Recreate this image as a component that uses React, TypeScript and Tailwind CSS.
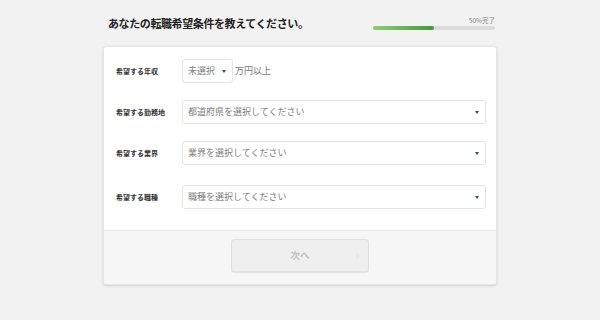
import { ChevronRight } from "lucide-react";

const font = { fontFamily: '"Noto Sans CJK JP", "Noto Sans", sans-serif' };

function Caret() {
  return (
    <svg width="4" height="3" viewBox="0 0 4 3" className="shrink-0">
      <path d="M0 0 L4 0 L2 3 Z" fill="#2f4f6f" />
    </svg>
  );
}

function Select({ text, wide = true }: { text: string; wide?: boolean }) {
  return (
    <div
      className={`flex h-[24px] items-center justify-between rounded-[3px] border border-[#e3e3e3] bg-white pl-[5px] pr-[6px] ${
        wide ? "flex-1" : "w-[51px]"
      }`}
    >
      <span className="text-[9px] text-[#808080]">{text}</span>
      <Caret />
    </div>
  );
}

function Row({ label, className, children }: { label: string; className?: string; children: React.ReactNode }) {
  return (
    <div className={`flex items-center ${className ?? ""}`}>
      <div className="w-[66px] text-[7px] font-bold text-[#333]">{label}</div>
      {children}
    </div>
  );
}

export default function App() {
  return (
    <div className="h-[320px] w-[600px] bg-[#f2f2f2]" style={font}>
      <div className="mx-auto w-[394px]">
        <div className="flex h-[46px] items-center justify-between pl-[5px] pr-[2px]">
          <h1 className="text-[11px] font-bold tracking-[-0.4px] text-[#222]">あなたの転職希望条件を教えてください。</h1>
          <div className="flex w-[122px] flex-col items-end pt-[1px]">
            <span className="mb-[3px] text-[6.5px] leading-none text-[#888]">50%完了</span>
            <div className="h-[4px] w-full rounded-full bg-[#dcdcdc]">
              <div className="h-full w-1/2 rounded-full bg-gradient-to-r from-[#8fcf6e] to-[#3f9a3a]" />
            </div>
          </div>
        </div>

        <div className="overflow-hidden rounded-[3px] border border-[#e6e6e6] bg-white shadow-[0_1px_3px_rgba(0,0,0,0.14)]">
          <div className="pb-[21px] pl-[12px] pr-[10px] pt-[12px]">
            <Row label="希望する年収">
              <Select text="未選択" wide={false} />
              <span className="ml-[2px] text-[9px] text-[#777]">万円以上</span>
            </Row>
            <Row label="希望する勤務地" className="mt-[17px]">
              <Select text="都道府県を選択してください" />
            </Row>
            <Row label="希望する業界" className="mt-[17px]">
              <Select text="業界を選択してください" />
            </Row>
            <Row label="希望する職種" className="mt-[20px]">
              <Select text="職種を選択してください" />
            </Row>
          </div>
          <div className="flex h-[54px] justify-center border-t border-[#e8e8e8] bg-[#f7f7f7] pt-[8px]">
            <button className="relative flex h-[33px] w-[138px] items-center justify-center rounded-[3px] border border-[#e2e2e2] bg-[#efefef] shadow-[0_1px_1px_rgba(0,0,0,0.08)]">
              <span className="text-[9.5px] font-bold text-[#c2c2c2]">次へ</span>
              <ChevronRight className="absolute right-[6px] top-1/2 -translate-y-1/2 text-[#e2e2e2]" size={9} strokeWidth={2.5} />
            </button>
          </div>
        </div>
      </div>
    </div>
  );
}
